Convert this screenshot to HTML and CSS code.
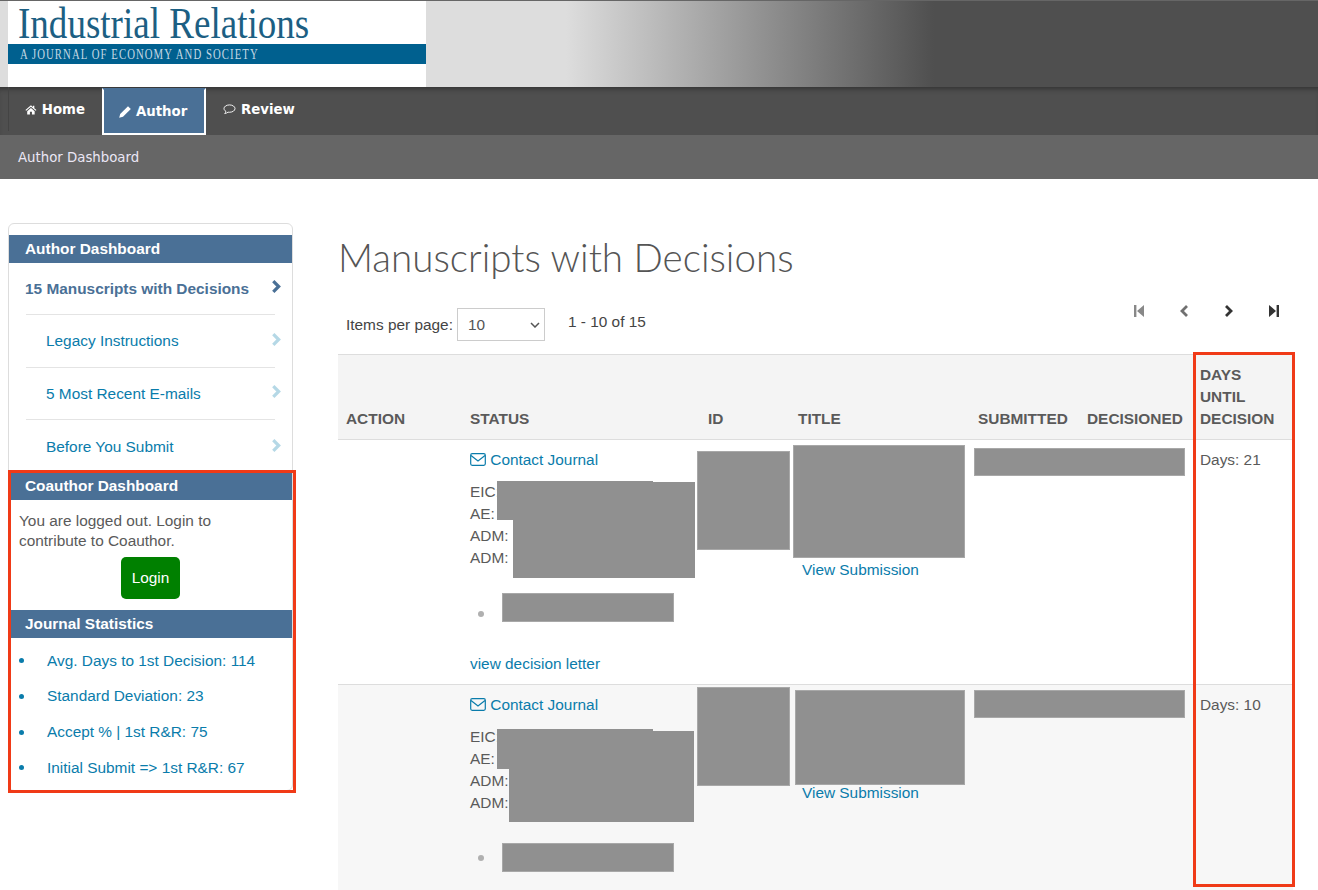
FILE: index.html
```html
<!DOCTYPE html>
<html lang="en">
<head>
    <meta charset="UTF-8">
    <title>Author Dashboard</title>
    <link rel="stylesheet" href="styles.css">
</head>

<body>
    <div id="banner">
        <div id="logo">
            <div class="logo-title"><span>Industrial Relations</span></div>
            <div class="logo-band"><span>A JOURNAL OF ECONOMY AND SOCIETY</span></div>
        </div>
    </div>

    <nav id="mainNav">
        <a class="nav-item nav-home" href="#">
            <svg class="nav-icon" viewBox="0 0 14 12"><path d="M7 1 L0.5 6.5 L1.4 7.5 L7 2.8 L12.6 7.5 L13.5 6.5 L11 4.4 V1.5 H9.4 V3 Z M2.6 8 V12 H5.8 V8.8 H8.2 V12 H11.4 V8 L7 4.2 Z" fill="#fff"/></svg>
            Home
        </a>
        <a class="nav-item nav-active" href="#">
            <svg class="nav-icon" viewBox="0 0 12 12"><path d="M9 0.2 L11.8 3 L4 10.8 L0.2 11.8 L1.2 8 Z" fill="#fff"/></svg>
            Author
        </a>
        <a class="nav-item" href="#">
            <svg class="nav-icon" viewBox="0 0 14 12"><path d="M7 1 C3.6 1 1 2.8 1 5 C1 6.2 1.8 7.2 3 7.9 C2.9 8.9 2.4 9.8 1.8 10.4 C3.2 10.2 4.6 9.6 5.4 8.9 C5.9 9 6.5 9 7 9 C10.4 9 13 7.2 13 5 C13 2.8 10.4 1 7 1 Z" fill="none" stroke="#fff"/></svg>
            Review
        </a>
    </nav>
    <div id="subNav">Author Dashboard</div>

    <div id="content">
        <aside id="sidebar">
            <h3 class="side-title">Author Dashboard</h3>
            <ul class="side-menu">
                <li class="current">
                    <a href="#">15 Manuscripts with Decisions</a>
                    <svg class="chev" viewBox="0 0 10 14"><path d="M2 2 L7 7 L2 12" fill="none" stroke="currentColor" stroke-width="3"/></svg>
                </li>
                <li>
                    <a href="#">Legacy Instructions</a>
                    <svg class="chev" viewBox="0 0 10 14"><path d="M2 2 L7 7 L2 12" fill="none" stroke="currentColor" stroke-width="3"/></svg>
                </li>
                <li>
                    <a href="#">5 Most Recent E-mails</a>
                    <svg class="chev" viewBox="0 0 10 14"><path d="M2 2 L7 7 L2 12" fill="none" stroke="currentColor" stroke-width="3"/></svg>
                </li>
                <li>
                    <a href="#">Before You Submit</a>
                    <svg class="chev" viewBox="0 0 10 14"><path d="M2 2 L7 7 L2 12" fill="none" stroke="currentColor" stroke-width="3"/></svg>
                </li>
            </ul>

            <h3 class="side-title">Coauthor Dashboard</h3>
            <div class="coauthor-box">
                <p>You are logged out. Login to contribute to Coauthor.</p>
                <button class="login-btn" type="button">Login</button>
            </div>

            <h3 class="side-title">Journal Statistics</h3>
            <ul class="stats">
                <li><a href="#">Avg. Days to 1st Decision: 114</a></li>
                <li><a href="#">Standard Deviation: 23</a></li>
                <li><a href="#">Accept % | 1st R&amp;R: 75</a></li>
                <li><a href="#">Initial Submit =&gt; 1st R&amp;R: 67</a></li>
            </ul>
        </aside>

        <main id="main">
            <h1>Manuscripts with Decisions</h1>

            <div class="toolbar">
                <label class="per-page">Items per page:
                    <span class="select-wrap">
                        <select>
                            <option>10</option>
                            <option>25</option>
                            <option>50</option>
                        </select>
                        <svg viewBox="0 0 10 6"><path d="M1 1 L5 5 L9 1" fill="none" stroke="#555" stroke-width="1.5"/></svg>
                    </span>
                </label>
                <span class="range">1 - 10 of 15</span>
                <div class="pager">
                    <svg class="faded" viewBox="0 0 12 14"><path d="M1 1 H3.4 V13 H1 Z M11 1 V13 L4 7 Z" fill="currentColor"/></svg>
                    <svg class="dim" viewBox="0 0 12 14"><path d="M9 2 L4 7 L9 12" fill="none" stroke="currentColor" stroke-width="2.8"/></svg>
                    <svg viewBox="0 0 12 14"><path d="M3 2 L8 7 L3 12" fill="none" stroke="currentColor" stroke-width="2.8"/></svg>
                    <svg viewBox="0 0 12 14"><path d="M1 1 L8 7 L1 13 Z M8.6 1 H11 V13 H8.6 Z" fill="currentColor"/></svg>
                </div>
            </div>

            <table id="manuscripts">
                <colgroup>
                    <col class="col-action"><col class="col-status"><col class="col-id"><col class="col-title">
                    <col class="col-submitted"><col class="col-decisioned"><col class="col-days">
                </colgroup>
                <thead>
                    <tr>
                        <th>Action</th>
                        <th>Status</th>
                        <th>ID</th>
                        <th>Title</th>
                        <th>Submitted</th>
                        <th>Decisioned</th>
                        <th>Days until decision</th>
                    </tr>
                </thead>
                <tbody>
                    <tr class="row-one">
                        <td></td>
                        <td>
                            <a href="#" class="contact">
                                <svg viewBox="0 0 16 13"><rect x="0.7" y="0.7" width="14.6" height="11.6" rx="1.5" fill="none" stroke="currentColor" stroke-width="1.2"/><path d="M1 2.5 L8 8 L15 2.5" fill="none" stroke="currentColor" stroke-width="1.2"/></svg>
                                Contact Journal
                            </a>
                            <div class="people">
                                EIC:<br>AE:<br>ADM:<br>ADM:
                                <span class="redact eic-a"></span>
                                <span class="redact eic-b"></span>
                                <span class="redact eic-c"></span>
                            </div>
                            <div class="coauthor"><span class="dot"></span><span class="redact-flow"></span></div>
                            <a href="#" class="decision-link">view decision letter</a>
                        </td>
                        <td><div class="redact-flow id-box"></div></td>
                        <td>
                            <div class="redact-flow title-box"></div>
                            <a href="#" class="view-link">View Submission</a>
                        </td>
                        <td colspan="2"><div class="redact-flow date-box"></div></td>
                        <td>Days: 21</td>
                    </tr>
                    <tr class="row-two">
                        <td></td>
                        <td>
                            <a href="#" class="contact">
                                <svg viewBox="0 0 16 13"><rect x="0.7" y="0.7" width="14.6" height="11.6" rx="1.5" fill="none" stroke="currentColor" stroke-width="1.2"/><path d="M1 2.5 L8 8 L15 2.5" fill="none" stroke="currentColor" stroke-width="1.2"/></svg>
                                Contact Journal
                            </a>
                            <div class="people">
                                EIC:<br>AE:<br>ADM:<br>ADM:
                                <span class="redact eic-a"></span>
                                <span class="redact eic-b"></span>
                                <span class="redact eic-c"></span>
                            </div>
                            <div class="coauthor"><span class="dot"></span><span class="redact-flow"></span></div>
                        </td>
                        <td><div class="redact-flow id-box"></div></td>
                        <td>
                            <div class="redact-flow title-box"></div>
                            <a href="#" class="view-link">View Submission</a>
                        </td>
                        <td colspan="2"><div class="redact-flow date-box"></div></td>
                        <td>Days: 10</td>
                    </tr>
                </tbody>
            </table>
        </main>
    </div>

    <!-- red highlight boxes drawn over the screenshot -->
    <div class="highlight hl-left"></div>
    <div class="highlight hl-right"></div>
</body>
</html>
```

FILE: styles.css
```css
body {
    position: relative;
    margin: 0;
    font-family: "Liberation Sans", Arial, sans-serif;
    font-size: 15.4px;
    color: #5a5a5a;
    background-color: #fff;
}
a {
    color: #0a7cab;
    text-decoration: none;
}

/* banner */
#banner {
    height: 86px;
    padding-left: 8px;
    border-top: 1px solid #666;
    background: linear-gradient(to right, #ddd 566px, #4f4f4f 934px);
}
#logo {
    width: 418px;
    height: 86px;
    background-color: #fff;
}
.logo-title {
    height: 40px;
    padding: 3px 0 0 10px;
    font-family: "Liberation Serif", serif;
    font-size: 44px;
    line-height: 40px;
    color: #1c5f83;
    white-space: nowrap;
}
.logo-title span {
    display: inline-block;
    transform: scaleX(0.842);
    transform-origin: 0 0;
}
.logo-band {
    height: 20px;
    padding-left: 12px;
    background-color: #00608f;
    font-family: "Liberation Serif", serif;
    font-size: 15px;
    line-height: 21px;
    color: #c4d8e4;
    white-space: nowrap;
}
.logo-band span {
    display: inline-block;
    letter-spacing: 1.5px;
    transform: scaleX(0.715);
    transform-origin: 0 0;
}

/* nav */
#mainNav {
    display: flex;
    height: 48px;
    padding-left: 8px;
    background-color: #4f4f4f;
    box-shadow: inset 0 5px 5px -3px #333;
}
.nav-item {
    display: flex;
    align-items: center;
    gap: 5px;
    height: 44px;
    padding: 0 17px;
    font-family: "DejaVu Sans", sans-serif;
    font-size: 13.3px;
    font-weight: bold;
    color: #fff;
}
.nav-home {
    width: 94px;
    box-sizing: border-box;
    padding-left: 16px;
    border-left: 1px solid #444;
}
.nav-active {
    box-sizing: border-box;
    width: 104px;
    height: 47px;
    margin-top: 1px;
    padding: 0 0 0 15px;
    border: 2px solid #fff;
    border-top-color: #4a7096;
    background-color: #4a7096;
}
.nav-active .nav-icon {
    width: 12px;
    height: 12px;
}
.nav-icon {
    width: 13px;
    height: 11px;
}
#subNav {
    height: 44px;
    padding-left: 18px;
    background-color: #666;
    font-family: "DejaVu Sans", sans-serif;
    font-size: 13.3px;
    line-height: 45px;
    color: #ebe6f5;
}

/* page columns */
#content {
    display: flex;
    gap: 45px;
    padding: 44px 25px 0 8px;
}

/* sidebar */
#sidebar {
    flex: 0 0 285px;
    box-sizing: border-box;
    height: 568px;
    padding-top: 11px;
    border: 1px solid #ddd;
    border-radius: 6px;
}
.side-title {
    margin: 0;
    height: 28px;
    padding-left: 16px;
    background-color: #4a7096;
    font-size: 15.4px;
    line-height: 28px;
    color: #fff;
}
.side-menu {
    list-style: none;
    margin: 0;
    padding: 0 17px 0 17px;
    height: 209px;
}
.side-menu li {
    display: flex;
    justify-content: space-between;
    align-items: center;
    height: 52px;
    padding-left: 20px;
    border-bottom: 1px solid #e4e4e4;
    box-sizing: border-box;
}
.side-menu li:nth-child(2) {
    height: 53px;
}
.side-menu li:last-child {
    padding-top: 2px;
    border-bottom: none;
}
.side-menu li.current {
    padding-left: 0;
}
.side-menu li.current a {
    margin-left: -1px;
    font-weight: bold;
    color: #4a7096;
}
.chev {
    width: 11px;
    height: 15px;
    margin: -4px -7px 0 0;
    color: #b5d8e6;
}
.current .chev {
    color: #4a7096;
}
.coauthor-box {
    height: 110px;
    padding: 11px 10px 0;
    box-sizing: border-box;
}
.coauthor-box p {
    margin: 0 0 6px;
    line-height: 20px;
    width: 215px;
}
.login-btn {
    display: block;
    width: 59px;
    height: 42px;
    margin: 0 auto;
    border: none;
    border-radius: 5px;
    background-color: #008000;
    color: #fff;
    font-family: inherit;
    font-size: 15.4px;
}
.stats {
    list-style: none;
    margin: 0;
    padding: 5px 0 0 10px;
}
.stats li {
    display: flex;
    align-items: center;
    height: 35.4px;
}
.stats li:nth-child(3) {
    padding-top: 1px;
}
.stats li::before {
    content: "";
    width: 5px;
    height: 5px;
    margin-right: 23px;
    border-radius: 50%;
    background-color: #0a7cab;
}

/* main column */
#main {
    flex: 1;
    min-width: 0;
}
h1 {
    margin: 0;
    height: 85px;
    font-family: "Lato", sans-serif;
    font-size: 38.6px;
    font-weight: 300;
    line-height: 68px;
    color: #555;
}
.toolbar {
    display: flex;
    align-items: center;
    height: 46px;
    padding-left: 8px;
}
.per-page {
    display: flex;
    align-items: center;
    gap: 4px;
    color: #444;
    margin-bottom: 13px;
}
.select-wrap {
    position: relative;
    display: block;
}
.select-wrap select {
    display: block;
    width: 88px;
    height: 33px;
    padding: 0 10px;
    border: 1px solid #ccc;
    background-color: #fff;
    font-family: inherit;
    font-size: 15.4px;
    color: #555;
    appearance: none;
}
.select-wrap svg {
    position: absolute;
    top: 14px;
    right: 5px;
    width: 10px;
    height: 6px;
}
.range {
    margin: 0 0 19px 23px;
    color: #444;
}
.pager {
    display: flex;
    gap: 33px;
    margin: 0 13px 41px auto;
    color: #333;
}
.pager svg {
    width: 12px;
    height: 14px;
}
.pager .faded {
    color: #888;
}
.pager .dim {
    color: #707070;
}

/* table */
#manuscripts {
    width: 955px;
    table-layout: fixed;
    border-collapse: collapse;
}
.col-action { width: 124px; }
.col-status { width: 238px; }
.col-id { width: 90px; }
.col-title { width: 180px; }
.col-submitted { width: 109px; }
.col-decisioned { width: 113px; }
.col-days { width: 101px; }

#manuscripts th {
    padding: 9px 8px;
    border-top: 1px solid #ddd;
    border-bottom: 1px solid #ddd;
    background-color: #f4f4f4;
    font-size: 15.4px;
    line-height: 22px;
    text-align: left;
    text-transform: uppercase;
    vertical-align: bottom;
    color: #5a5a5a;
}
#manuscripts td {
    padding: 9px 8px 8px;
    vertical-align: top;
    line-height: 22px;
}
.row-one td {
    height: 227px;
}
.row-two td {
    height: 188px;
    border-top: 1px solid #ddd;
    background-color: #f7f7f7;
}
.contact svg {
    width: 16px;
    height: 13px;
    vertical-align: -1px;
}
.people {
    position: relative;
    margin-top: 10px;
}
.redact, .redact-flow {
    background-color: #909090;
}
.redact-flow {
    box-sizing: border-box;
    border: 1px solid #a8a8a8;
}
.redact {
    position: absolute;
}
.eic-a { left: 27px; top: 0; width: 156px; height: 39px; }
.eic-b { left: 27px; top: 1px; width: 198px; height: 38px; }
.eic-c { left: 43px; top: 39px; width: 182px; height: 58px; }
.row-two .eic-a { top: 3px; height: 40px; }
.row-two .eic-b { top: 5px; width: 197px; }
.row-two .eic-c { left: 39px; top: 43px; width: 185px; height: 53px; }

.coauthor {
    display: flex;
    align-items: center;
    margin-top: 24px;
}
.row-two .coauthor {
    margin-top: 29px;
}
.dot {
    width: 6px;
    height: 6px;
    margin: 12px 18px 0 8px;
    border-radius: 50%;
    background-color: #b0b0b0;
}
.row-two .dot {
    margin-top: 1px;
}
.coauthor .redact-flow {
    width: 172px;
    height: 29px;
}
.decision-link {
    display: block;
    margin-top: 31px;
}
.id-box {
    width: 93px;
    height: 99px;
    margin: 2px 0 0 -11px;
}
.title-box {
    width: 172px;
    height: 113px;
    margin: -4px 0 0 -5px;
}
.view-link {
    display: block;
    margin: 1px 0 0 4px;
}
.date-box {
    width: 211px;
    height: 28px;
    margin: -1px 0 0 -4px;
}
.row-two .id-box {
    margin-top: -7px;
}
.row-two .title-box {
    width: 170px;
    height: 95px;
    margin: -4px 0 0 -3px;
}
.row-two .view-link {
    margin-top: -3px;
    margin-left: 4px;
}
.row-two .date-box {
    margin-top: -4px;
}

/* red boxes on top of the page */
.highlight {
    position: absolute;
    box-sizing: border-box;
    border: 3px solid #f03a17;
}
.hl-left {
    left: 8px;
    top: 470px;
    width: 288px;
    height: 323px;
}
.hl-right {
    left: 1193px;
    top: 352px;
    width: 102px;
    height: 535px;
}
```
